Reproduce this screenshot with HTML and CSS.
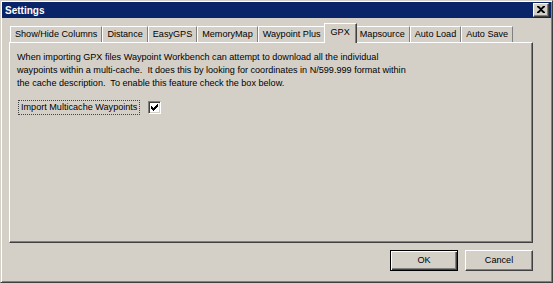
FILE: index.html
```html
<!DOCTYPE html>
<html lang="en">
<head>
  <meta charset="UTF-8">
  <title>Settings</title>
  <link rel="stylesheet" href="styles.css">
</head>
<body>
  <div class="window">
    <div class="titlebar">
      <span class="title">Settings</span>
      <div class="close-btn">
        <svg width="8" height="7" viewBox="0 0 8 7">
          <path d="M0 0h2l2 2 2-2h2v1L5 3.5 8 6v1H6L4 5 2 7H0V6l3-2.5L0 1z" fill="#000"/>
        </svg>
      </div>
    </div>

    <div class="content">
      <div class="tabs">
        <div class="tab">Show/Hide Columns</div>
        <div class="tab">Distance</div>
        <div class="tab">EasyGPS</div>
        <div class="tab">MemoryMap</div>
        <div class="tab">Waypoint Plus</div>
        <div class="tab active">GPX</div>
        <div class="tab">Mapsource</div>
        <div class="tab">Auto Load</div>
        <div class="tab">Auto Save</div>
      </div>

      <div class="panel">
        <p class="desc">
          When importing GPX files Waypoint Workbench can attempt to download all the individual<br>
          waypoints within a multi-cache.&nbsp; It does this by looking for coordinates in N/599.999 format within<br>
          the cache description.&nbsp; To enable this feature check the box below.
        </p>

        <div class="option">
          <span class="option-label">Import Multicache Waypoints</span>
          <span class="checkbox">
            <svg width="7" height="7" viewBox="0 0 7 7">
              <path d="M0 2h1v1h1v1h1V3h1V2h1V1h1V0h1v3H6v1H5v1H4v1H3v1H2V6H1V5H0z" fill="#000"/>
            </svg>
          </span>
        </div>
      </div>

      <div class="buttons">
        <div class="btn default">OK</div>
        <div class="btn">Cancel</div>
      </div>
    </div>
  </div>
</body>
</html>
```

FILE: styles.css
```css
body {
  margin: 0;
  font-family: "Liberation Sans", Arial, sans-serif;
  font-size: 9.1px;
  color: #000;
  background: #d4d0c8;
}

.window {
  width: 553px;
  height: 283px;
  box-sizing: border-box;
  background: #d4d0c8;
  border: 1px solid;
  border-color: #d4d0c8 #404040 #404040 #d4d0c8;
  box-shadow: inset 1px 1px #fff, inset -1px -1px #808080;
  padding: 1px;
  display: flex;
  flex-direction: column;
}

/* title bar */
.titlebar {
  height: 16px;
  flex: none;
  background: #0a246a;
  display: flex;
  align-items: center;
  justify-content: space-between;
  padding: 0 2px 0 3px;
}

.title {
  color: #fff;
  font-weight: bold;
  font-size: 10px;
}

.close-btn {
  width: 16px;
  height: 14px;
  box-sizing: border-box;
  background: #d4d0c8;
  border: 1px solid;
  border-color: #fff #404040 #404040 #fff;
  box-shadow: inset -1px -1px #808080;
  display: flex;
  align-items: center;
  justify-content: center;
  padding: 0 1px 1px 0;
}

/* body */
.content {
  flex: 1;
  display: flex;
  flex-direction: column;
  padding: 5px 18px 0 7px;
}

.tabs {
  display: flex;
  align-items: flex-end;
  height: 19px;
  padding-left: 1px;
}

.tab {
  height: 16px;
  box-sizing: border-box;
  padding: 0 4px;
  line-height: 15px;
  white-space: nowrap;
  border-top: 1px solid #fff;
  border-left: 1px solid #fff;
  border-right: 1px solid #808080;
}

.tab.active {
  position: relative;
  z-index: 1;
  height: 20px;
  margin: 0 -2px -1px;
  padding: 0 6px;
  line-height: 17px;
  background: #d4d0c8;
  border-right-color: #404040;
  box-shadow: inset -1px 0 #808080;
}

.panel {
  height: 201px;
  box-sizing: border-box;
  border: 1px solid;
  border-color: #fff #404040 #404040 #fff;
  box-shadow: inset -1px -1px #808080;
  padding: 8px 7px;
}

.desc {
  margin: 0;
  line-height: 13px;
  white-space: nowrap;
}

.option {
  display: flex;
  align-items: center;
  gap: 8px;
  margin-top: 10px;
  margin-left: 1px;
}

.option-label {
  height: 15px;
  box-sizing: border-box;
  line-height: 13px;
  padding: 0 2px;
  border: 1px dotted #444;
}

.checkbox {
  width: 13px;
  height: 13px;
  box-sizing: border-box;
  background: #fff;
  border: 1px solid;
  border-color: #808080 #fff #fff #808080;
  box-shadow: inset 1px 1px #404040, inset -1px -1px #d4d0c8;
  display: flex;
  align-items: center;
  justify-content: center;
}

/* dialog buttons */
.buttons {
  display: flex;
  justify-content: flex-end;
  gap: 7px;
  margin-top: 7px;
}

.btn {
  width: 68px;
  height: 21px;
  box-sizing: border-box;
  text-align: center;
  line-height: 19px;
  border: 1px solid;
  border-color: #fff #404040 #404040 #fff;
  box-shadow: inset -1px -1px #808080;
}

.btn.default {
  border: 1px solid #000;
  box-shadow: inset 1px 1px #fff, inset -1px -1px #404040, inset -2px -2px #808080;
}
```
